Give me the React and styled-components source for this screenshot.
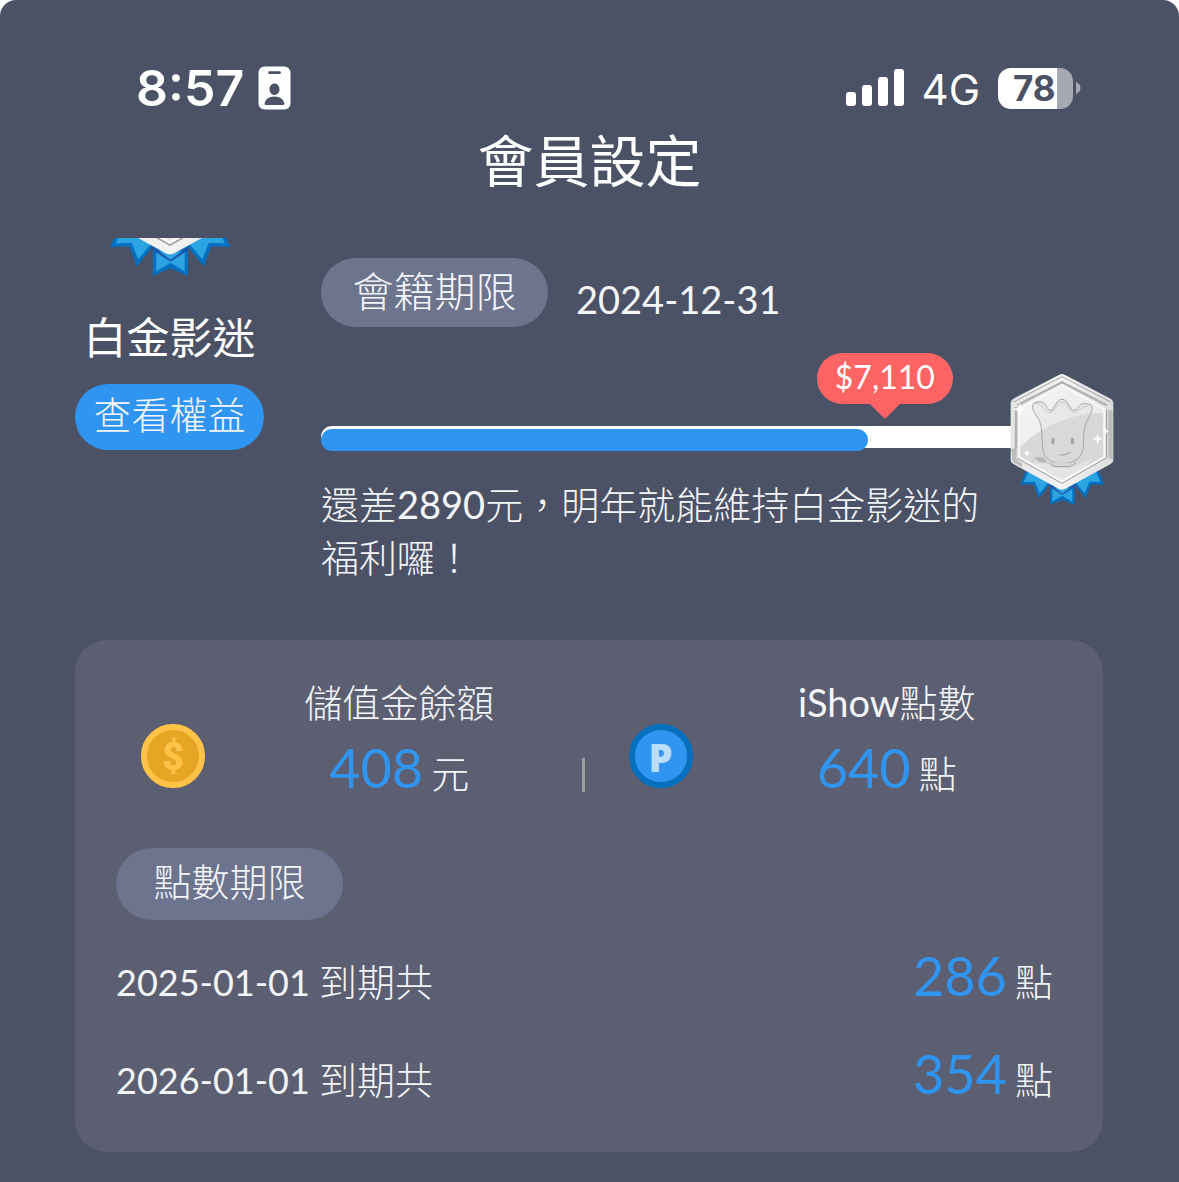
import React from 'react'
import styled, { createGlobalStyle } from 'styled-components'

const member = {
  level: '白金影迷',
  expire: '2024-12-31',
  spent: 7110,
  target: 10000,
}

const expireList = [
  { date: '2025-01-01', points: 286 },
  { date: '2026-01-01', points: 354 },
]

const StatusBar = () => (
  <Status>
    <StatusGroup>
      <Clock>8:57</Clock>
      <svg width="33" height="44" viewBox="0 0 33 44" aria-hidden="true">
        <path
          fill="#fff"
          fillRule="evenodd"
          d="M6.500 0.500H26.500a6 6 0 0 1 6 6V37.500a6 6 0 0 1-6 6H6.500a6 6 0 0 1-6-6V6.500a6 6 0 0 1 6-6ZM11.500 5.300a1.300 1.300 0 0 0 0 2.700H21.500a1.300 1.300 0 0 0 0-2.700ZM16.500 17.500c-2.800 0-5 2.500-5 5.700s2.200 5.800 5 5.800 5-2.600 5-5.800-2.200-5.700-5-5.700ZM16.500 30.500c-5.600 0-9.600 3.200-9.800 7.300 0 .8.400 1.200 1.200 1.200H25.100c.8 0 1.200-.4 1.200-1.200-.2-4.100-4.200-7.300-9.800-7.300Z"
        />
      </svg>
    </StatusGroup>
    <StatusGroup>
      <svg width="58" height="38" viewBox="0 0 58 38" fill="#fff" aria-hidden="true">
        <rect x="0" y="23" width="10" height="14" rx="3" />
        <rect x="16" y="16" width="10" height="21" rx="3" />
        <rect x="32" y="8" width="10" height="29" rx="3" />
        <rect x="48" y="0" width="10" height="37" rx="3" />
      </svg>
      <Network>4G</Network>
      <Battery>
        <BatteryBody>78</BatteryBody>
        <svg width="5" height="12" viewBox="0 0 5 12" aria-hidden="true">
          <path d="M0 0C2.500 1 4.500 3.200 4.500 6S2.500 11 0 12Z" fill="#a6a8b2" />
        </svg>
      </Battery>
    </StatusGroup>
  </Status>
)

const Badge = ({ id, width, height }) => (
  <svg width={width} height={height} viewBox="62 40 312 396" aria-hidden="true">
    <defs>
      <linearGradient id={`${id}-rim`} x1="0" y1="0" x2="1" y2="0">
        <stop offset="0" stopColor="#e4e4e4" />
        <stop offset="0.5" stopColor="#f4f4f4" />
        <stop offset="1" stopColor="#dcdcdc" />
      </linearGradient>
      <linearGradient id={`${id}-face`} x1="0" y1="0" x2="1" y2="1">
        <stop offset="0" stopColor="#f4f4f4" />
        <stop offset="1" stopColor="#e6e6e6" />
      </linearGradient>
      <clipPath id={`${id}-clip`}>
        <path d="M218 78L342 148V292L218 363L92 292V148Z" />
      </clipPath>
    </defs>
    <g fill="#0570c0">
      <path d="M112 330L92 375L132 374L148 416L190 364Z" />
      <path d="M325 330L345 375L305 374L289 416L247 364Z" />
      <path d="M182 366V436L219 420L256 436V366Z" />
    </g>
    <g fill="#2ca4e2">
      <path d="M118 334L104 367L137 366L151 401L178 368Z" />
      <path d="M319 334L333 367L300 366L286 401L259 368Z" />
      <path d="M189 384V426L219 408L249 426V384Z" />
    </g>
    <path d="M182 374L219 402L256 374V382L219 406L182 382Z" fill="#1e55ac" />
    <path
      d="M210 45Q218 41 226 45L364 117Q372 122 372 130V301Q372 309 364 313L227 388Q218 393 209 388L72 313Q64 309 64 301V130Q64 122 72 117Z"
      fill={`url(#${id}-rim)`}
    />
    <path d="M357 152H370V300L357 292Z" fill="#bcbcbc" />
    <path d="M66 268L82 266V300L100 312L96 322L70 306Z" fill="#bcbcbc" />
    <path d="M72 127L218 51L364 127" fill="none" stroke="#a4a4a4" strokeWidth="3" />
    <path d="M80 142V268M84 137L218 68L352 137" fill="none" stroke="#b0b0b0" strokeWidth="7" />
    <path d="M352 150V294L218 371L84 296" fill="none" stroke="#9a9a9a" strokeWidth="3" />
    <path d="M218 77L345 148V292L218 365L90 292V148Z" fill={`url(#${id}-face)`} />
    <g clipPath={`url(#${id}-clip)`}>
      <path d="M85 268C150 205 235 160 355 158V370H218L85 292Z" fill="#d8d8d8" />
      <path d="M134 310L260 318L304 300L270 345L218 372L140 330Z" fill="#e4e4e4" />
    </g>
    <path d="M218 77L345 148V292L218 365L90 292V148Z" fill="none" stroke="#fafafa" strokeWidth="5" />
    <path
      d="M131 134C134 126 145 127 155 127C170 127 172 153 184 152C195 151 200 119 218 119C237 119 242 151 253 152C264 153 270 132 282 132C294 132 306 134 308 141C311 158 294 178 287 199C282 220 283 247 281 268C276 297 250 312 220 312C188 312 164 298 160 266C157 235 160 207 151 185C142 165 126 154 131 134Z"
      fill="#dcdcdc"
      fillOpacity="0.35"
      stroke="#a6a6a6"
      strokeWidth="3"
    />
    <path d="M137 130C158 131 166 157 181 158C198 157 202 128 218 128C234 128 240 157 254 158C268 158 277 140 298 138" fill="none" stroke="#b4b4b4" strokeWidth="2" />
    <path d="M134 293H162L174 308H150Z" fill="#b8b8b8" />
    <path d="M180 309Q185 320 201 321H240Q253 319 258 309" fill="#d5d5d5" stroke="#9a9a9a" strokeWidth="3" />
    <ellipse cx="191" cy="244" rx="5" ry="10" fill="#a4a4a4" />
    <ellipse cx="249" cy="244" rx="5" ry="10" fill="#a4a4a4" />
    <path d="M210 286Q230 289 245 277" fill="none" stroke="#a0a0a0" strokeWidth="3" />
    <g fill="#fff">
      <path d="M91 127L95 144L112 149L95 154L91 171L87 154L70 149L87 144Z" />
      <path d="M325 223L329 234L340 238L329 242L325 253L321 242L310 238L321 234Z" />
      <path d="M349 205L352 212L359 215L352 218L349 225L346 218L339 215L346 212Z" />
      <path d="M113 270L116 278L124 281L116 284L113 292L110 284L102 281L110 278Z" />
    </g>
  </svg>
)

const Balance = ({ type, sign, label, amount, unit }) => (
  <BalanceItem>
    <Coin $type={type}>{sign}</Coin>
    <BalanceText>
      <Label>{label}</Label>
      <div>
        <Amount>{amount}</Amount> <Unit>{unit}</Unit>
      </div>
    </BalanceText>
  </BalanceItem>
)

const App = () => {
  const percent = (member.spent / member.target) * 100

  return (
    <>
      <GlobalStyle />
      <Page>
        <StatusBar />
        <Title>會員設定</Title>

        <Main>
          <Profile>
            <Level>
              <BadgeWindow>
                <Badge id="level" width="148" height="188" />
              </BadgeWindow>
              <LevelName>{member.level}</LevelName>
              <BenefitButton type="button">查看權益</BenefitButton>
            </Level>

            <Info>
              <ExpireRow>
                <Tag>會籍期限</Tag>
                <ExpireDate>{member.expire}</ExpireDate>
              </ExpireRow>
              <Progress>
                <Rail
                  role="progressbar"
                  aria-label={member.level}
                  aria-valuenow={member.spent}
                  aria-valuemax={member.target}
                >
                  <Fill style={{ width: `${percent}%` }} />
                </Rail>
                <Bubble style={{ left: `${percent}%` }}>{`$${member.spent.toLocaleString('en-US')}`}</Bubble>
                <Goal>
                  <Badge id="goal" width="104" height="132" />
                </Goal>
              </Progress>
              <Hint>{`還差${member.target - member.spent}元，明年就能維持白金影迷的福利囉！`}</Hint>
            </Info>
          </Profile>

          <Card>
            <Balances>
              <Balance type="gold" sign="$" label="儲值金餘額" amount="408" unit="元" />
              <Divider />
              <Balance type="blue" sign="P" label="iShow點數" amount="640" unit="點" />
            </Balances>
            <PointTag>點數期限</PointTag>
            <List>
              {expireList.map((item) => (
                <ListItem key={item.date}>
                  <ListDate>
                    {item.date} <Unit>到期共</Unit>
                  </ListDate>
                  <div>
                    <Amount>{item.points}</Amount> <Unit>點</Unit>
                  </div>
                </ListItem>
              ))}
            </List>
          </Card>
        </Main>
      </Page>
    </>
  )
}

export default App



const GlobalStyle = createGlobalStyle`
* {
    box-sizing: border-box;
}

body {
    margin: 0;
    background-color: #fff;
    font-family: Lato, "Noto Sans CJK TC Light", "Noto Sans CJK TC", sans-serif;
    font-weight: 400;
    color: #f4f5f8;
}
`

const Page = styled.div`
min-height: 100vh;
background-color: #4c5265;
border-radius: 16px 16px 0 0;
padding-top: 56px;
`

const Status = styled.header`
display: flex;
justify-content: space-between;
align-items: center;
height: 64px;
padding: 0 98px 0 136px;
font-family: Inter, sans-serif;
color: #fff;
`

const StatusGroup = styled.div`
display: flex;
align-items: center;
gap: 14px;
`

const Clock = styled.div`
font-size: 50px;
font-weight: 600;
`

const Network = styled.div`
font-size: 42px;
font-weight: 400;
padding: 2px 4px 0;
`

const Battery = styled.div`
display: flex;
align-items: center;
gap: 3px;
`

const BatteryBody = styled.div`
width: 75px;
height: 41px;
border-radius: 13px;
background: linear-gradient(to right, #fff 79%, #a6a8b2 79%);
color: #4c5265;
font-size: 35px;
font-weight: 700;
line-height: 41px;
padding-left: 15px;
`

const Title = styled.h1`
margin: 0;
height: 118px;
text-align: center;
font-family: "Noto Sans CJK TC", sans-serif;
font-size: 56px;
font-weight: 400;
line-height: 76px;
color: #fff;
`

const Main = styled.main`
padding: 0 65px 29px 75px;
`

const Profile = styled.section`
display: flex;
gap: 57px;
`

const Level = styled.div`
width: 189px;
flex-shrink: 0;
display: flex;
flex-direction: column;
align-items: center;
`

const BadgeWindow = styled.div`
height: 38px;
overflow: hidden;
display: flex;
align-items: flex-end;
`

const LevelName = styled.div`
margin-top: 28px;
font-family: "Noto Sans CJK TC", sans-serif;
font-size: 43px;
font-weight: 400;
line-height: 62px;
color: #fff;
`

const BenefitButton = styled.button`
width: 100%;
height: 66px;
margin-top: 18px;
padding: 0 0 8px;
border: none;
border-radius: 33px;
background-color: #3095f0;
color: #f4f5f8;
font-family: "Noto Sans CJK TC", sans-serif;
font-size: 38px;
font-weight: 300;
line-height: 56px;
cursor: pointer;
`

const Info = styled.div`
flex: 1;
padding-top: 20px;
`

const ExpireRow = styled.div`
display: flex;
align-items: center;
gap: 28px;
`

const Tag = styled.div`
width: 227px;
height: 69px;
border-radius: 35px;
background-color: #6d748d;
text-align: center;
font-family: "Noto Sans CJK TC", sans-serif;
font-size: 41px;
font-weight: 300;
line-height: 62px;
`

const PointTag = styled(Tag)`
height: 72px;
border-radius: 36px;
font-size: 38px;
line-height: 64px;
margin-left: 41px;
`

const ExpireDate = styled.div`
font-size: 38px;
padding-top: 12px;
`

const Progress = styled.div`
position: relative;
margin-top: 99px;
`

const Rail = styled.div`
height: 22px;
margin-right: 24px;
border-radius: 11px;
background-color: #fff;
`

const Fill = styled.div`
position: relative;
top: 3px;
height: 22px;
border-radius: 11px;
background-color: #3095f0;
`

const Bubble = styled.div`
position: absolute;
bottom: 44px;
transform: translateX(-50%);
height: 51px;
padding: 0 18px;
border-radius: 26px;
background-color: #ff6464;
color: #fff;
font-size: 32px;
line-height: 48px;

&::after {
    content: "";
    position: absolute;
    top: 50px;
    left: 50%;
    margin-left: -16px;
    border: 16px solid transparent;
    border-top-color: #ff6464;
    border-bottom: none;
}
`

const Goal = styled.div`
position: absolute;
right: 0;
top: -53px;
line-height: 0;
`

const Hint = styled.p`
margin: 30px 130px 0 0;
font-size: 38px;
line-height: 53px;
`

const Card = styled.section`
margin: 56px 11px 0 0;
padding: 32px 0 22px;
border-radius: 32px;
background-color: #5b5f71;
`

const Balances = styled.div`
display: flex;
align-items: center;
padding: 0 34px 0 66px;
margin-bottom: 44px;
`

const BalanceItem = styled.div`
flex: 1;
display: flex;
align-items: center;
gap: 12px;
`

const Coin = styled.div`
width: 64px;
height: 64px;
margin-top: 36px;
flex-shrink: 0;
border-radius: 50%;
border: 6px solid ${({ $type }) => ($type === 'gold' ? '#ffc348' : '#0570c0')};
background-color: ${({ $type }) => ($type === 'gold' ? '#e6a523' : '#3095f0')};
color: ${({ $type }) => ($type === 'gold' ? '#ffc348' : '#b9defc')};
font-family: ${({ $type }) => ($type === 'gold' ? 'Roboto' : '"Open Sans"')}, sans-serif;
font-size: 38px;
font-weight: 900;
line-height: 54px;
text-align: center;
`

const BalanceText = styled.div`
flex: 1;
text-align: center;
`

const Label = styled.div`
font-size: 38px;
line-height: 60px;
`

const Amount = styled.span`
margin-right: 4px;
font-size: 54px;
line-height: 72px;
color: #3095f0;
`

const Unit = styled.span`
font-size: 38px;
`

const Divider = styled.div`
width: 3px;
height: 34px;
margin: 74px 44px 0 0;
background-color: #9c9c9c;
`

const List = styled.ul`
list-style: none;
margin: 14px 0 0;
padding: 0 50px 0 41px;
`

const ListItem = styled.li`
display: flex;
justify-content: space-between;
align-items: baseline;
padding: 6px 0;
line-height: 72px;
`

const ListDate = styled.div`
font-size: 36px;
`
